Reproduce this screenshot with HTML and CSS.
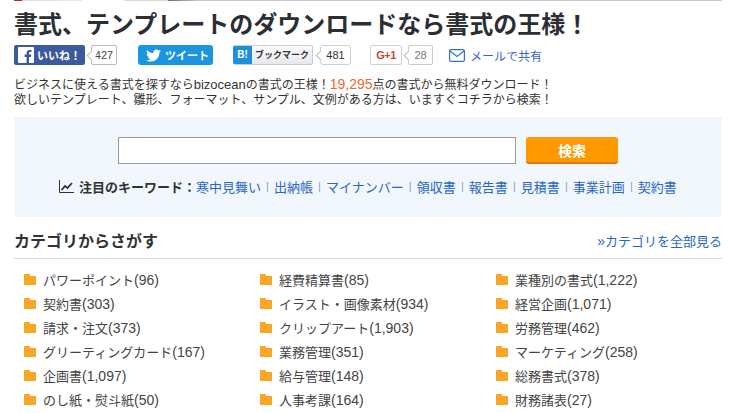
FILE: index.html
```html
<!DOCTYPE html>
<html lang="ja">
<head>
<meta charset="utf-8">
<title>書式の王様</title>
<link rel="stylesheet" href="styles.css">
</head>
<body>
<div class="topline"></div>
<main class="page">
  <h1 class="title">書式、テンプレートのダウンロードなら書式の王様！</h1>
  <div class="social">
    <div class="share share-fb">
      <span class="btn-fb">
        <svg class="fb-icon" viewBox="0 0 16 16" width="16" height="16"><rect width="16" height="16" rx="1" fill="#fff"/><path d="M11 16v-6h2l.3-2.400H11V6.200c0-.7.2-1.100 1.200-1.100h1.200V3c-.3 0-1-.1-1.800-.1-1.800 0-3 1.100-3 3.100v1.600H6.600V10h2v6z" fill="#3b5598"/></svg>
        いいね！
      </span>
      <span class="count count-fb">427</span>
    </div>
    <div class="share share-tw">
      <span class="btn-tw">
        <svg viewBox="0 0 24 24" width="15" height="15"><path fill="#fff" d="M23.900 4.600c-.9.400-1.800.7-2.800.8 1-.6 1.800-1.600 2.200-2.700-1 .6-2 1-3.100 1.200C19.300 2.900 18 2.300 16.600 2.300c-2.700 0-4.900 2.200-4.900 4.900 0 .4 0 .8.100 1.100C7.700 8.100 4.100 6.100 1.700 3.100c-.4.700-.7 1.600-.7 2.500 0 1.700.9 3.200 2.200 4.100-.8 0-1.600-.2-2.200-.6v.1c0 2.400 1.700 4.400 3.900 4.800-.4.100-.8.200-1.300.2-.3 0-.6 0-.9-.1.600 2 2.400 3.400 4.600 3.400-1.700 1.300-3.800 2.100-6.100 2.100-.4 0-.8 0-1.200-.1 2.200 1.400 4.800 2.200 7.500 2.200 9.100 0 14-7.500 14-14v-.6c1-.7 1.800-1.600 2.500-2.500z"/></svg>
        ツイート
      </span>
    </div>
    <div class="share share-hb">
      <span class="btn-hb"><span class="hb-mark">B!</span><span class="hb-label">ブックマーク</span></span>
      <span class="count count-hb">481</span>
    </div>
    <div class="share share-gp">
      <span class="btn-gp">G+1</span>
      <span class="count count-gp">28</span>
    </div>
    <a class="mail" href="#">
      <svg viewBox="0 0 16 13" width="16" height="13"><rect x=".6" y=".6" width="14.800" height="11.800" rx="1.500" fill="none" stroke="#2f74c8" stroke-width="1.200"/><path d="M1 2l7 5.500L15 2" fill="none" stroke="#2f74c8" stroke-width="1.200"/></svg>
      メールで共有
    </a>
  </div>
  <p class="lead">ビジネスに使える書式を探すなら<span class="latin">bizocean</span>の書式の王様！<span class="num">19,295</span>点の書式から無料ダウンロード！<br>欲しいテンプレート、雛形、フォーマット、サンプル、文例がある方は、いますぐコチラから検索！</p>
  <section class="search">
    <form class="search-form">
      <input class="search-input" type="text" aria-label="検索">
      <button class="search-btn" type="button">検索</button>
    </form>
    <div class="keywords">
      <svg class="chart" viewBox="0 0 15 13" width="15" height="13"><path d="M.5 0v12.500H15" fill="none" stroke="#333" stroke-width="1"/><path d="M2.500 10L6 6l2.500 2L13 3" fill="none" stroke="#333" stroke-width="1.800"/></svg>
      <strong class="kw-label">注目のキーワード：</strong>
      <a href="#">寒中見舞い</a><i>|</i><a href="#">出納帳</a><i>|</i><a href="#">マイナンバー</a><i>|</i><a href="#">領収書</a><i>|</i><a href="#">報告書</a><i>|</i><a href="#">見積書</a><i>|</i><a href="#">事業計画</a><i>|</i><a href="#">契約書</a>
    </div>
  </section>
  <div class="cat-head">
    <h2>カテゴリからさがす</h2>
    <a href="#"><span class="raquo">»</span>カテゴリを全部見る</a>
  </div>
  <ul class="cats">
    <li>パワーポイント<span>(96)</span></li><li>経費精算書<span>(85)</span></li><li>業種別の書式<span>(1,222)</span></li>
    <li>契約書<span>(303)</span></li><li>イラスト・画像素材<span>(934)</span></li><li>経営企画<span>(1,071)</span></li>
    <li>請求・注文<span>(373)</span></li><li>クリップアート<span>(1,903)</span></li><li>労務管理<span>(462)</span></li>
    <li>グリーティングカード<span>(167)</span></li><li>業務管理<span>(351)</span></li><li>マーケティング<span>(258)</span></li>
    <li>企画書<span>(1,097)</span></li><li>給与管理<span>(148)</span></li><li>総務書式<span>(378)</span></li>
    <li>のし紙・熨斗紙<span>(50)</span></li><li>人事考課<span>(164)</span></li><li>財務諸表<span>(27)</span></li>
  </ul>
</main>
</body>
</html>
```
FILE: styles.css
```css
* { box-sizing: border-box; }
html, body { margin: 0; padding: 0; }
body {
  width: 730px;
  height: 413px;
  overflow: hidden;
  background: #fff;
  color: #333;
  font-family: "Liberation Sans", "Noto Sans CJK JP", sans-serif;
  font-size: 12px;
}
.topline {
  width: 722px; height: 1px;
  background: linear-gradient(90deg, #fff 14px, #b0283a 14px, #b0283a 22px, #cfe0ea 22px, #e4ecf0 82px, #fff 82px, #fff 124px, #e0dccb 124px, #e0dccb 168px, #6f6f74 168px, #c6ccd6 200px);
}
.page { width: 708px; margin-left: 14px; }
.title {
  margin: 9px 0 0;
  font-size: 24px;
  line-height: 30px;
  font-weight: 700;
  color: #2b2f33;
  white-space: nowrap;
}
.social { display: flex; align-items: center; height: 22px; margin-top: 4px; }
.share { display: flex; align-items: center; }
.share-tw { margin-left: 21px; }
.share-hb { margin-left: 20px; }
.share-gp { margin-left: 19px; }
.btn-fb {
  display: flex; align-items: center; gap: 3px;
  width: 71px; height: 20px; padding-left: 4px;
  background: #3c5a9e; color: #fff; font-size: 11px; font-weight: 700;
  border-radius: 2px; white-space: nowrap;
}
.fb-icon { width: 16px; height: 16px; }
.count {
  position: relative; display: flex; align-items: center; justify-content: center;
  height: 20px; background: #fff; border: 1px solid #bbb; border-radius: 2px;
  font-size: 11px; color: #444;
}
.count::before {
  content: ""; position: absolute; left: -4px; top: 6px; width: 6px; height: 6px;
  background: #fff; border-left: 1px solid #bbb; border-bottom: 1px solid #bbb;
  transform: rotate(45deg);
}
.count-fb { width: 26px; margin-left: 6px; }
.btn-tw {
  display: flex; align-items: center; gap: 4px; width: 75px; height: 20px; padding-left: 8px;
  background: #1b95e0; color: #fff; font-size: 11px; font-weight: 700; border-radius: 3px;
  white-space: nowrap;
}
.btn-hb {
  display: flex; width: 80px; height: 20px; border: 1px solid #c9ccd2; border-left: 0;
  border-radius: 2px; background: linear-gradient(#fbfbfc, #e6e8eb); overflow: hidden;
}
.hb-mark {
  width: 19px; height: 20px; margin-top: -1px; background: #1d8fdc; color: #fff;
  font-size: 10px; font-weight: 700; text-align: center; line-height: 20px;
}
.hb-label { padding-left: 3px; font-size: 9px; font-weight: 700; color: #333; line-height: 19px; white-space: nowrap; }
.count-hb { width: 31px; margin-left: 7px; border-color: #c9d0da; border-radius: 3px; color: #333; }
.btn-gp {
  display: flex; align-items: center; justify-content: center; width: 32px; height: 20px;
  border: 1px solid #d0d0d0; border-radius: 2px; background: #fff;
  color: #c8473c; font-size: 11px; font-weight: 700; letter-spacing: -.5px;
}
.count-gp { width: 25px; margin-left: 6px; border-color: #ccc; color: #777; }
.mail {
  display: flex; align-items: center; gap: 5px; margin-left: 16px;
  color: #3568c8; font-size: 12px; text-decoration: none; white-space: nowrap;
}
.lead { margin: 11px 0 0; font-size: 12px; line-height: 15px; color: #333; white-space: nowrap; }
.latin { font-size: 13px; }
.num { font-size: 14px; color: #ee6a2c; }
.search {
  height: 100px; margin-top: 9px; padding-top: 20px;
  background: #f1f7fd;
}
.search-form { display: flex; gap: 10px; margin-left: 104px; }
.search-input {
  width: 398px; height: 27px; margin: 0; background: #fff;
  border: 1px solid #999; border-radius: 0;
}
.search-btn {
  width: 92px; height: 27px; padding: 0; background: #ff9900; color: #fff;
  border: 0; border-bottom: 2px solid #e9760d; border-radius: 3px;
  font: 700 14px "Liberation Sans", "Noto Sans CJK JP", sans-serif;
}
.keywords {
  display: flex; align-items: center; margin: 13px 0 0 45px; height: 18px;
  font-size: 13px; white-space: nowrap;
}
.chart { margin-right: 5px; }
.kw-label { color: #333; }
.keywords a { color: #2a66c8; text-decoration: none; }
.keywords i { width: 13px; text-align: center; font-style: normal; font-size: 11px; color: #8aa0c0; }
.cat-head {
  display: flex; align-items: center; justify-content: space-between;
  height: 42px; padding-top: 5px; border-bottom: 1px solid #ddd;
}
.cat-head h2 { margin: 0; font-size: 16px; font-weight: 700; color: #333; }
.cat-head a { color: #2a66c8; font-size: 13px; text-decoration: none; }
.raquo { font-size: 14px; font-weight: 400; }
.cats {
  list-style: none; margin: 0; padding: 9px 0 0 10px;
  display: grid; grid-template-columns: repeat(3, 236px); grid-auto-rows: 24px;
}
.cats li {
  position: relative; padding-left: 19px; font-size: 13px; line-height: 24px;
  color: #444; white-space: nowrap;
}
.cats li span { font-size: 14px; }
.cats li::before {
  content: ""; position: absolute; left: 0; top: 8px; width: 12px; height: 9px;
  background: #f8a626; border-radius: 1px;
}
.cats li::after {
  content: ""; position: absolute; left: 0; top: 6px; width: 6px; height: 3px;
  background: #f8a626; border-radius: 1px 1px 0 0;
}
```
